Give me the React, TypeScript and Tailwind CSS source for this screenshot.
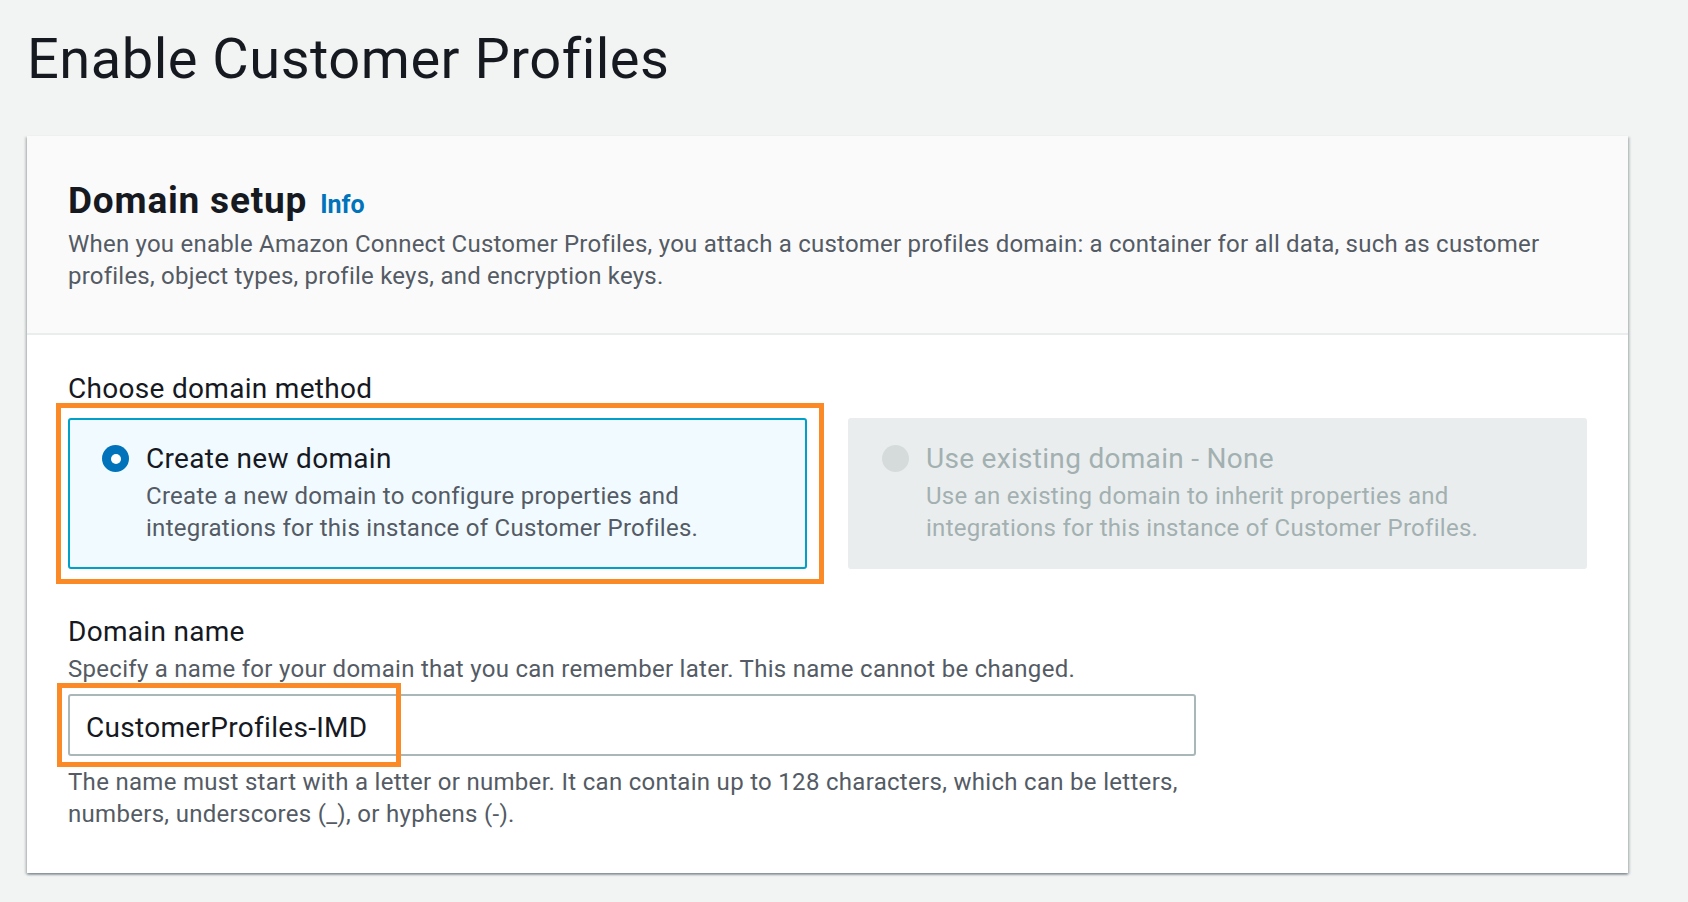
export default function App() {
  return (
    <div className="min-h-[902px] bg-[#f2f3f3] font-['Roboto',sans-serif] text-[#16191f]">
      <h1 className="pt-[27px] pl-[27px] text-[56px] leading-[64px] font-normal tracking-[0.5px]">Enable Customer Profiles</h1>

      <div className="mt-[45px] ml-[27px] w-[1601px] bg-white shadow-[0_2px_2px_0_rgba(0,28,36,0.3),2px_1px_2px_0_rgba(0,28,36,0.15),-2px_1px_2px_0_rgba(0,28,36,0.15)]">
        {/* header */}
        <div className="bg-[#fafafa] border-b-2 border-[#eaeded] px-[41px] pt-[43px] pb-[41px]">
          <div className="flex items-baseline h-[44px]">
            <h2 className="text-[37px] leading-[44px] font-bold tracking-[0.8px]">Domain setup</h2>
            <span className="ml-[13px] text-[25px] leading-none font-bold text-[#0073bb]">Info</span>
          </div>
          <p className="mt-[5px] text-[24px] leading-[32px] tracking-[0.22px] text-[#545b64]">
            When you enable Amazon Connect Customer Profiles, you attach a customer profiles domain: a container for all data, such as customer
            <br />
            profiles, object types, profile keys, and encryption keys.
          </p>
        </div>

        {/* body */}
        <div className="px-[41px] pt-[36px] pb-[43px]">
          <div className="text-[28px] leading-[36px] tracking-[0.3px]">Choose domain method</div>

          <div className="mt-[11px] grid grid-cols-2 gap-[41px]">
            <div className="relative">
              <div className="h-[151px] rounded-[3px] border-2 border-[#00a1c9] bg-[#f1faff] pl-[32px] pt-[21px] flex gap-[17px]">
                <div className="mt-[4px] w-[27px] h-[27px] rounded-full bg-[#0073bb] flex items-center justify-center shrink-0">
                  <div className="w-[10px] h-[10px] rounded-full bg-white" />
                </div>
                <div>
                  <div className="text-[28px] leading-[36px] tracking-[0.3px]">Create new domain</div>
                  <p className="mt-[3px] text-[24px] leading-[32px] tracking-[0.28px] text-[#545b64]">
                    Create a new domain to configure properties and
                    <br />
                    integrations for this instance of Customer Profiles.
                  </p>
                </div>
              </div>
              <div className="absolute -left-[12px] -right-[17px] -top-[15px] -bottom-[15px] border-[5px] border-[#fb8a26] pointer-events-none" />
            </div>

            <div className="h-[151px] rounded-[3px] border-2 border-transparent bg-[#eaeded] pl-[32px] pt-[21px] flex gap-[17px]">
              <div className="mt-[4px] w-[27px] h-[27px] rounded-full bg-[#d5dbdb] shrink-0" />
              <div>
                <div className="text-[28px] leading-[36px] tracking-[0.3px] text-[#a2b0b1]">Use existing domain - None</div>
                <p className="mt-[3px] text-[24px] leading-[32px] tracking-[0.28px] text-[#a2b0b1]">
                  Use an existing domain to inherit properties and
                  <br />
                  integrations for this instance of Customer Profiles.
                </p>
              </div>
            </div>
          </div>

          <div className="mt-[45px] text-[28px] leading-[36px] tracking-[0.3px]">Domain name</div>
          <p className="mt-[3px] text-[24px] leading-[32px] tracking-[0.28px] text-[#545b64]">
            Specify a name for your domain that you can remember later. This name cannot be changed.
          </p>
          <div className="relative mt-[9px] w-[1128px]">
            <div className="h-[62px] rounded-[3px] border-2 border-[#aab7b8] bg-white pl-[16px] pt-[6px] flex items-center text-[28px] tracking-[0.3px]">
              CustomerProfiles-IMD
            </div>
            <div className="absolute -left-[11px] -top-[11px] w-[344px] h-[84px] border-[5px] border-[#fb8a26] pointer-events-none" />
          </div>
          <p className="mt-[10px] text-[24px] leading-[32px] tracking-[0.3px] text-[#545b64]">
            The name must start with a letter or number. It can contain up to 128 characters, which can be letters,
            <br />
            numbers, underscores (_), or hyphens (-).
          </p>
        </div>
      </div>
    </div>
  );
}
